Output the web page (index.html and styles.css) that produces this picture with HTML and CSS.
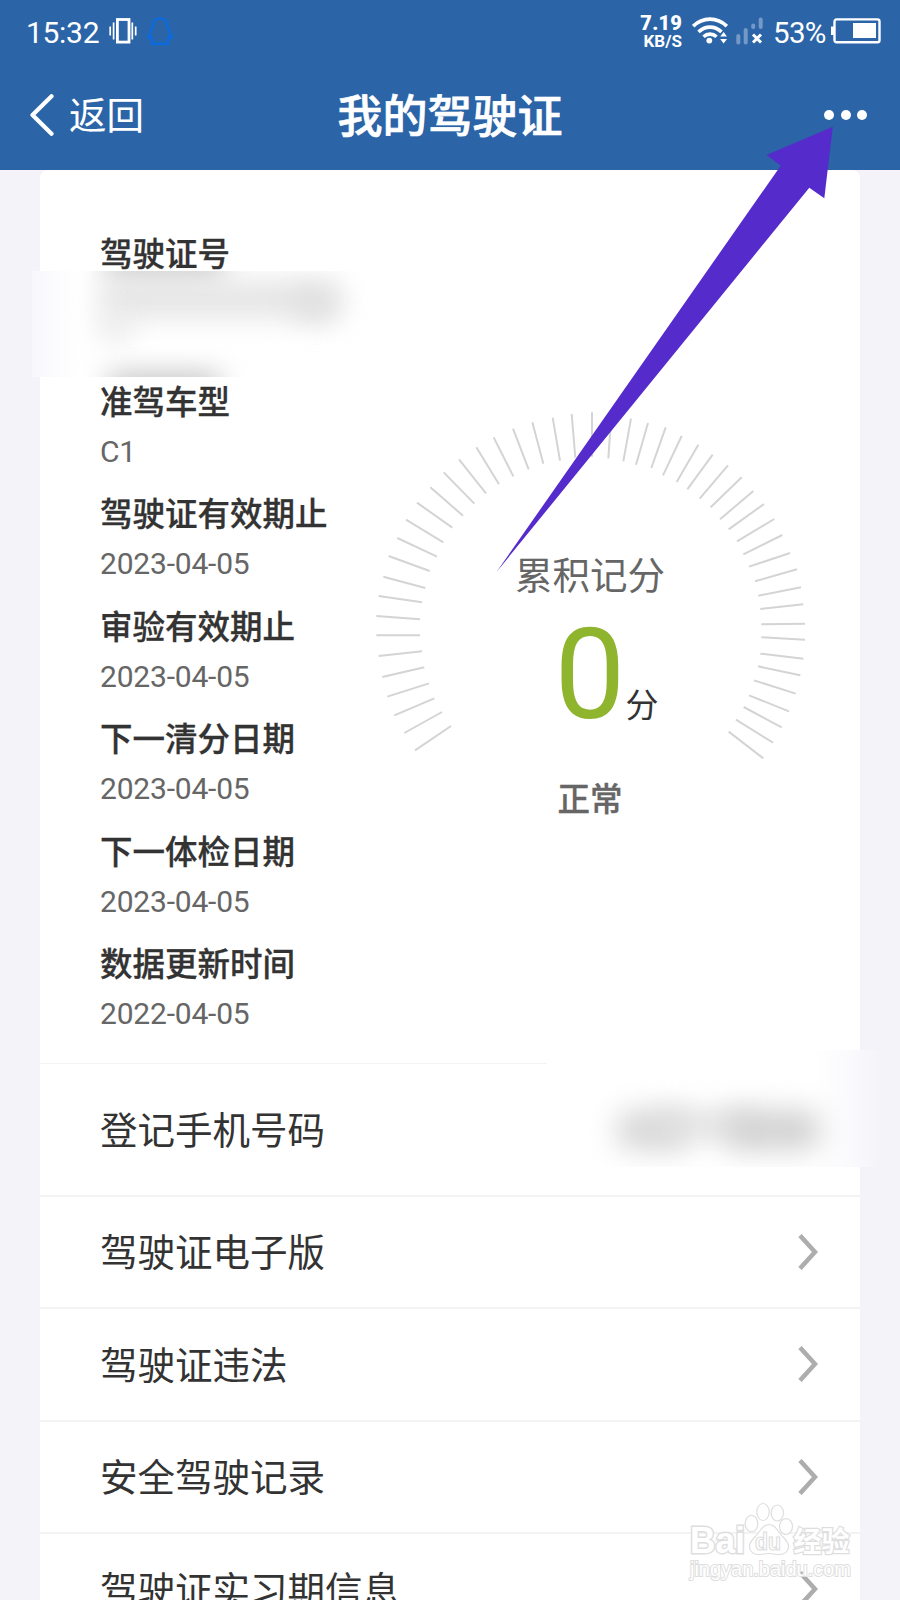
FILE: index.html
```html
<!doctype html>
<html lang="zh-CN">
	<head>
		<meta charset="utf-8">
		<title>我的驾驶证</title>
		<link rel="stylesheet" href="styles.css">
	</head>
	<body>

		<div class="statusbar">
			<span class="time">15:32</span>
			<svg class="vibrate" width="28" height="26" viewBox="0 0 28 26">
				<rect x="8.4" y="1.5" width="11.6" height="22.6" fill="none" stroke="#fff" stroke-width="2.8"/>
				<path d="M4.6 4.5v17M1.2 8.5v9M23.3 4.5v17M26.7 8.5v9" stroke="#fff" stroke-width="1.7"/>
			</svg>
			<svg class="qq" width="26" height="29" viewBox="0 0 26 29">
				<path d="M13 1.3C7.8 1.3 5.2 4.8 5.2 9.5c0 1.5-.2 2.3-1 3.6C2.5 15.7 1.3 18.2 1.5 20.3c.1 1 1.2.4 2.3-.8.5 1.8 1.3 3 2.5 4-1.2.7-2 1.5-1.800 2.400.4 1.900 6.500 1.700 8.500-.3 2 2 8.100 2.200 8.500.3.200-.9-.6-1.700-1.800-2.400 1.200-1 2-2.200 2.500-4 1.100 1.200 2.200 1.800 2.300.8.200-2.100-1-4.600-2.700-7.200-.8-1.300-1-2.100-1-3.600C20.800 4.800 18.200 1.300 13 1.300z" fill="none" stroke="#0a6be0" stroke-width="2.200"/>
			</svg>
			<div class="speed"><b>7.19</b><span>KB/S</span></div>
			<svg class="wifi" width="36" height="28" viewBox="0 0 36 28">
				<g fill="none" stroke="#fff" stroke-width="3.6">
					<path d="M1.2 9.2C10.6-.2 25.4-.2 34.8 9.2"/>
					<path d="M6.5 14.8C13.5 8.5 22.5 8.5 29.5 14.8"/>
					<path d="M11.5 19.8C15.3 16.2 20.7 16.2 24.5 19.8"/>
				</g>
				<circle cx="17.300" cy="23.600" r="2.900" fill="#fff"/>
				<path d="M31.600 15l3.400 4.600h-6.800zM31.600 26.500l3.400-4.600h-6.800z" fill="#fff"/>
			</svg>
			<svg class="signal" width="28" height="28" viewBox="0 0 28 28">
				<path d="M2.300 19v6.500M9.700 13v12.500M17.200 8.500v1.500M24.700 2.500v7.500" stroke="#7599c6" stroke-width="4" stroke-linecap="round"/>
				<path d="M17 17.500l8 8M25 17.500l-8 8" stroke="#fff" stroke-width="3"/>
			</svg>
			<span class="percent">53%</span>
			<svg class="battery" width="50" height="26" viewBox="0 0 50 26">
				<rect x="3.500" y="1.400" width="45" height="22.800" rx="2" fill="none" stroke="#fff" stroke-width="2.400"/>
				<path d="M0 8.500h3.500v8.500H0z" fill="#fff"/>
				<path d="M22 5h23v15H22z" fill="#fff"/>
			</svg>
		</div>

		<div class="navbar">
			<div class="back">
				<svg width="24" height="42" viewBox="0 0 24 42"><path d="M21.500 2.200L2.500 21l19 18.800" fill="none" stroke="#fff" stroke-width="4.200" stroke-linecap="round" stroke-linejoin="round"/></svg>
				<span>返回</span>
			</div>
			<h1>我的驾驶证</h1>
			<div class="more"><i></i><i></i><i></i></div>
		</div>

		<div class="card">
			<div class="summary">
				<dl class="fields">
					<dt>驾驶证号</dt>
					<dd class="hidden-number"></dd>
					<dt>准驾车型</dt>
					<dd>C1</dd>
					<dt>驾驶证有效期止</dt>
					<dd>2023-04-05</dd>
					<dt>审验有效期止</dt>
					<dd>2023-04-05</dd>
					<dt>下一清分日期</dt>
					<dd>2023-04-05</dd>
					<dt>下一体检日期</dt>
					<dd>2023-04-05</dd>
					<dt>数据更新时间</dt>
					<dd>2022-04-05</dd>
				</dl>

				<div class="gauge">
					<svg class="ticks" width="460" height="450" viewBox="0 0 1380 1350">
						<path d="M165 1081L273 1008M133 1029L246 966M103 976L223 925M82 920L207 880M67 861L193 832M56 798L186 784M49 736L180 736
							M49 678L180 688M56 618L186 637M70 560L196 594M86 498L209 543M112 444L231 500M138 389L250 457M171 338L277 413
							M211 292L309 377M251 247L343 341M297 208L378 310M349 172L417 283M401 142L460 259M459 116L506 238M517 97L550 221
							M578 83L600 212M635 72L646 203M696 67L696 200M754 72L745 205M813 86L790 214M864 99L828 224M917 112L874 234
							M965 138L909 256M1015 164L950 276M1058 194L982 298M1104 226L1019 326M1145 262L1052 352M1180 303L1080 388
							M1212 342L1106 418M1243 387L1131 454M1267 435L1150 493M1290 489L1167 530M1311 538L1185 574M1323 592L1195 617
							M1330 643L1201 657M1335 701L1204 703M1335 749L1204 742M1330 806L1201 791M1321 856L1194 829M1307 911L1182 871
							M1287 964L1167 916M1265 1012L1151 951M1239 1058L1128 989M1210 1105L1106 1025"/>
					</svg>
					<div class="score">
						<div class="score-label">累积记分</div>
						<div class="score-value"><b>0</b><span>分</span></div>
						<div class="score-state">正常</div>
					</div>
				</div>
			</div>

			<div class="row phone"><span>登记手机号码</span></div>
			<div class="row"><span>驾驶证电子版</span><svg class="chevron" viewBox="0 0 20 38"><path d="M2 2.500L17 19 2 35.500"/></svg></div>
			<div class="row"><span>驾驶证违法</span><svg class="chevron" viewBox="0 0 20 38"><path d="M2 2.500L17 19 2 35.500"/></svg></div>
			<div class="row"><span>安全驾驶记录</span><svg class="chevron" viewBox="0 0 20 38"><path d="M2 2.500L17 19 2 35.500"/></svg></div>
			<div class="row"><span>驾驶证实习期信息</span><svg class="chevron" viewBox="0 0 20 38"><path d="M2 2.500L17 19 2 35.500"/></svg></div>
		</div>

		<!-- blurred private data -->
		<div class="mask mask-id"><i class="s1"></i><i class="s2"></i><i class="s3"></i><i class="s4"></i><i class="s5"></i></div>
		<div class="mask mask-phone"><i class="s1"></i><i class="s2"></i><i class="s3"></i></div>

		<svg class="arrow" width="340" height="448" viewBox="495 125 340 448">
			<path d="M496.500 572L780.700 165.700 766.500 155 832.800 126.700 824.300 198.300 809.300 187.700z" fill="#562bcb"/>
		</svg>

		<svg class="watermark" width="170" height="84" viewBox="686 1500 170 84">
			<g fill="#fff" stroke="#dedede" stroke-width="1.200">
				<text x="690" y="1553" class="wm-name" textLength="55" lengthAdjust="spacingAndGlyphs">Bai</text>
				<ellipse cx="751.500" cy="1523.500" rx="6.300" ry="8.200"/>
				<ellipse cx="763" cy="1512" rx="6.200" ry="8.500"/>
				<ellipse cx="777.300" cy="1513" rx="6.200" ry="8"/>
				<ellipse cx="786" cy="1526.500" rx="6.500" ry="7.800"/>
				<path d="M769 1524.500c5 0 8 4.500 11 9 4 5 8.500 7.500 8.500 13 0 5-4 8-9 8-4 0-7-1-10.500-1s-6.500 1-10.500 1c-5 0-9-3-9-8 0-5.500 4.500-8 8.500-13 3-4.500 6-9 11-9z"/>
				<text x="755" y="1550" class="wm-du" textLength="26" lengthAdjust="spacingAndGlyphs">du</text>
				<text x="793.500" y="1551.500" class="wm-cn" textLength="56">经验</text>
				<text x="690" y="1575.500" class="wm-url" textLength="161">jingyan.baidu.com</text>
			</g>
		</svg>

	</body>
</html>
```
FILE: styles.css
```css
* {
	box-sizing: border-box;
}

body {
	position: relative;
	margin: 0;
	width: 900px;
	height: 1600px;
	overflow: hidden;
	background: #f3f3f9;
	color: #333;
	font-family: Roboto, "Noto Sans CJK SC", sans-serif;
}

svg {
	display: block;
	flex: none;
}

.statusbar {
	display: flex;
	align-items: flex-start;
	height: 60px;
	padding: 0 19px 0 26px;
	background: #2b65a8;
	color: #fff;
}
	.time {
		width: 83px;
		padding-top: 14px;
		font-size: 30px;
		line-height: 38px;
		letter-spacing: -0.3px;
	}
	.vibrate {
		margin-top: 18px;
	}
	.qq {
		margin: 17px 0 0 10px;
	}
	.speed {
		display: flex;
		flex-direction: column;
		align-items: flex-end;
		width: 61px;
		margin: 14px 10px 0 auto;
		font-size: 17px;
		font-weight: 700;
		line-height: 18px;
	}
	.speed b {
		font-size: 20px;
		line-height: 18px;
		letter-spacing: 0.2px;
	}
	.wifi {
		margin-top: 17px;
	}
	.signal {
		margin: 17px 0 0 8px;
	}
	.percent {
		width: 58px;
		margin-left: 9px;
		padding-top: 14px;
		font-size: 29.5px;
		line-height: 38px;
		letter-spacing: -0.7px;
	}
	.battery {
		margin-top: 18px;
	}

.navbar {
	display: grid;
	grid-template-columns: 1fr auto 1fr;
	align-items: center;
	height: 110px;
	padding: 0 33px 0 30px;
	background: #2b65a8;
	color: #fff;
}
	.back {
		display: flex;
		align-items: center;
		gap: 15px;
		font-size: 37.5px;
		line-height: 50px;
	}
	.back span {
		padding-top: 2px;
	}
	.navbar h1 {
		margin: 0;
		padding: 5px 0 0 3px;
		font-size: 45px;
		font-weight: 500;
		line-height: 60px;
		-webkit-text-stroke: 0.7px #fff;
	}
	.more {
		display: flex;
		justify-content: flex-end;
		gap: 6.3px;
	}
	.more i {
		width: 10px;
		height: 10px;
		border-radius: 50%;
		background: #fff;
	}

.card {
	width: 820px;
	margin: 0 auto;
	border-radius: 8px 8px 0 0;
	background: #fff;
}

.summary {
	display: flex;
	height: 893px;
	padding: 63px 40px 0 60px;
}
	.fields {
		flex: none;
		width: 260px;
		margin: 0;
	}
	.fields dt {
		font-size: 32.5px;
		font-weight: 500;
		line-height: 45px;
		white-space: nowrap;
		-webkit-text-stroke: 0.3px #333;
	}
	.fields dd {
		margin: 8px 0 24.5px;
		color: #666;
		font-size: 30px;
		line-height: 35px;
		letter-spacing: -0.2px;
	}
	.fields .hidden-number {
		height: 70px;
	}

.gauge {
	display: grid;
	flex: none;
	width: 460px;
	height: 450px;
	margin-top: 157px;
}
	.ticks,
	.score {
		grid-area: 1 / 1;
	}
	.ticks path {
		fill: none;
		stroke: #d4d4d4;
		stroke-width: 6;
	}
	.score {
		padding-top: 161px;
		text-align: center;
	}
	.score-label {
		color: #666;
		font-size: 37.5px;
		line-height: 50px;
	}
	.score-value {
		display: flex;
		align-items: baseline;
		justify-content: center;
		height: 174px;
		padding-left: 33px;
		line-height: 148px;
	}
	.score-value b {
		color: #8fb42e;
		font-size: 126px;
		font-weight: 400;
	}
	.score-value span {
		position: relative;
		top: -1px;
		font-size: 33px;
	}
	.score-state {
		color: #666;
		font-size: 32.5px;
		font-weight: 500;
		line-height: 50px;
		-webkit-text-stroke: 0.3px #666;
	}

.row {
	display: flex;
	align-items: center;
	justify-content: space-between;
	height: 112.5px;
	padding: 0 42px 0 60px;
	border-top: 2px solid #f3f3f4;
	font-size: 37.5px;
	line-height: 50px;
}
.row span {
	padding-top: 3px;
}
.row.phone {
	height: 131.5px;
	border-top-width: 1px;
}
	.phone span {
		padding-top: 4px;
	}
	.chevron {
		width: 20px;
		height: 38px;
		fill: none;
		stroke: #adadad;
		stroke-width: 4.6;
	}

.mask {
	position: absolute;
	overflow: hidden;
}
	.mask i {
		position: absolute;
		border-radius: 12px;
		filter: blur(14px);
	}

.mask-id {
	left: 32px;
	top: 271px;
	width: 348px;
	height: 106px;
	background: linear-gradient(90deg, #f8f8fc 0, #fff 48px);
}
	.mask-id .s1 {
		left: 72px;
		top: -16px;
		width: 122px;
		height: 22px;
		background: #bcbcbc;
	}
	.mask-id .s2 {
		left: 68px;
		top: 10px;
		width: 240px;
		height: 36px;
		background: #e4e4e4;
	}
	.mask-id .s3 {
		left: 262px;
		top: 20px;
		width: 42px;
		height: 28px;
		background: #dedede;
	}
	.mask-id .s4 {
		left: 66px;
		top: 44px;
		width: 34px;
		height: 24px;
		background: #e6e6e6;
	}
	.mask-id .s5 {
		left: 74px;
		top: 104px;
		width: 116px;
		height: 20px;
		background: #b4b4b4;
	}

.mask-phone {
	left: 547px;
	top: 1050px;
	width: 335px;
	height: 117px;
	background: linear-gradient(90deg, #fff 265px, #fafafd 305px, #f3f3f9 335px);
}
	.mask-phone .s1 {
		left: 70px;
		top: 60px;
		width: 70px;
		height: 40px;
		background: #d8d8d8;
	}
	.mask-phone .s2 {
		left: 110px;
		top: 62px;
		width: 100px;
		height: 26px;
		background: #dedede;
	}
	.mask-phone .s3 {
		left: 180px;
		top: 60px;
		width: 92px;
		height: 40px;
		background: #d2d2d2;
	}

.arrow {
	position: absolute;
	left: 495px;
	top: 125px;
}

.watermark {
	position: absolute;
	left: 686px;
	top: 1500px;
}
	.wm-name {
		font: 700 36px "Liberation Sans", sans-serif;
		stroke-width: 3;
		paint-order: stroke;
	}
	.wm-du {
		font: 700 23px "Liberation Sans", sans-serif;
	}
	.wm-cn {
		font: 700 28px "Noto Sans CJK SC", sans-serif;
		stroke-width: 2.5;
		paint-order: stroke;
	}
	.wm-url {
		font: 400 20px "Liberation Sans", sans-serif;
		stroke-width: 2;
		paint-order: stroke;
	}
```
